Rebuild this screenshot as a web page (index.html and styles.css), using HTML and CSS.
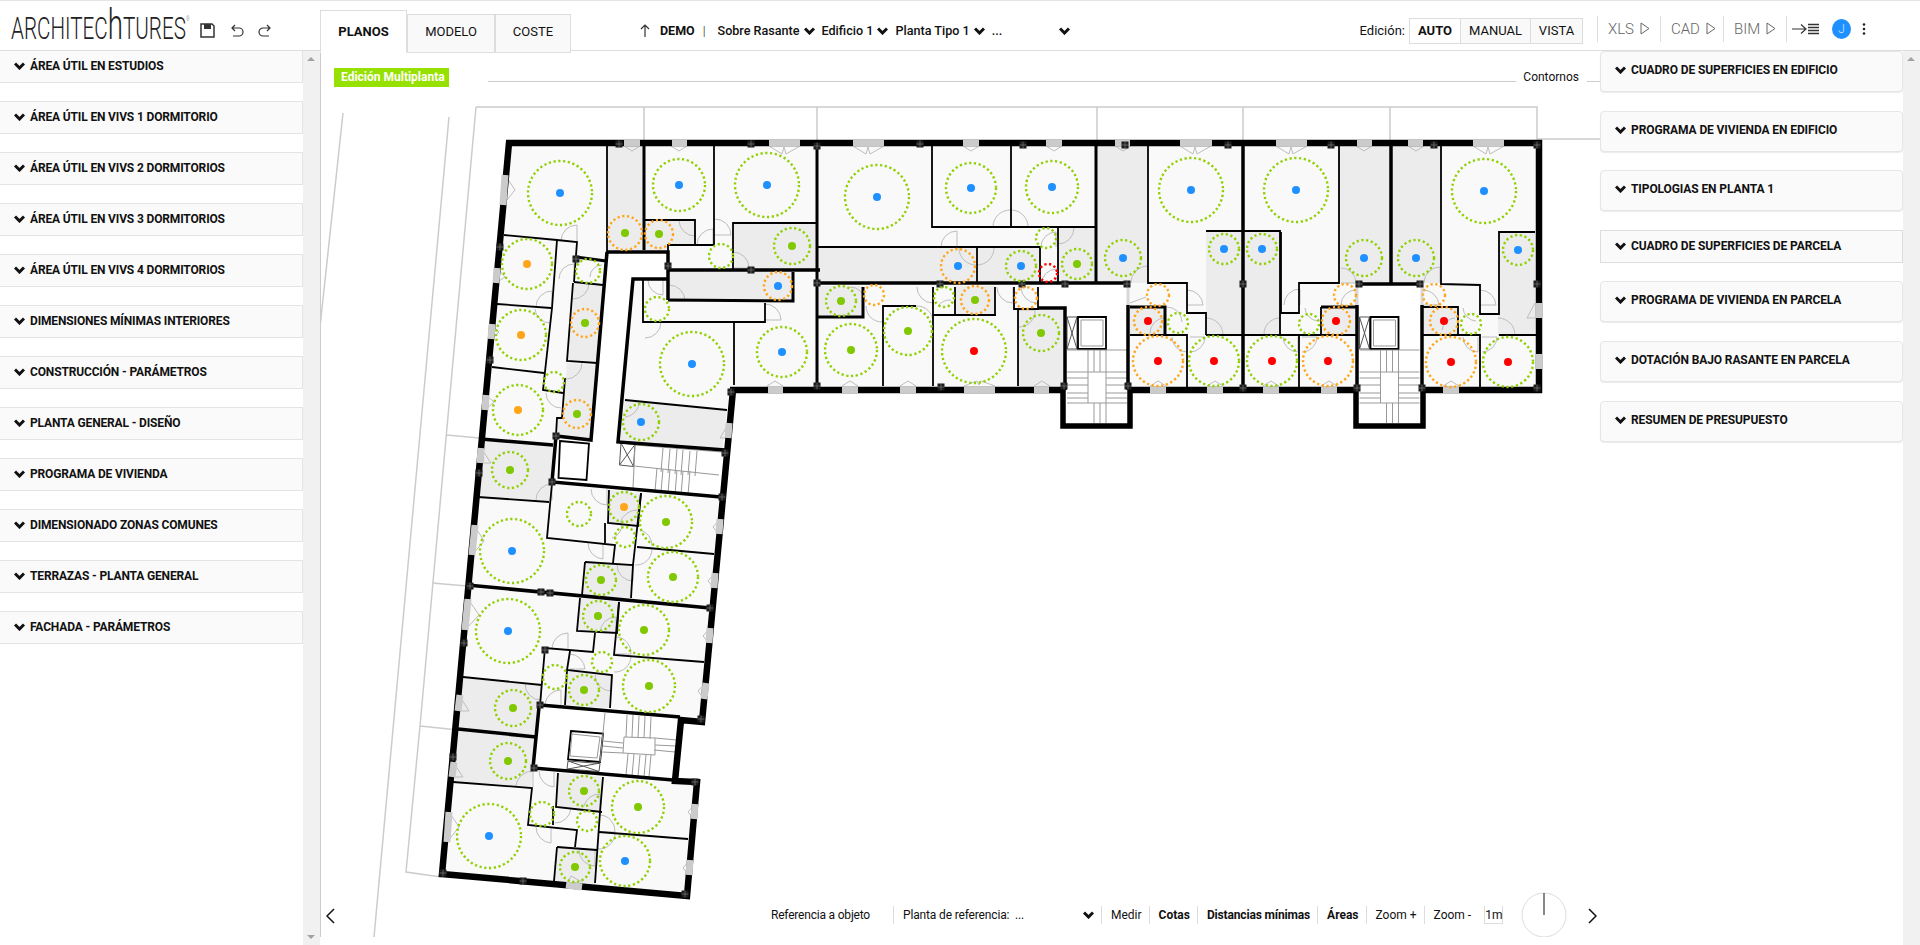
FILE: index.html
```html
<!doctype html>

<html lang="es">

<head>
    <meta charset="utf-8">
    <title>Architechtures</title>
    <link rel="stylesheet" href="styles.css">
</head>

<body>

    <header class="topbar">
        <div class="brand">
            <div class="logo"><span class="logo-word">ARCHITEC<span class="logo-h">h</span>TURES<span class="logo-reg">®</span></span></div>
            <svg class="tool tool-save" viewBox="0 0 15 15" width="15" height="15">
                <path class="ico" d="M1 1h11l2 2v11H1z" />
                <path class="ico-fill" d="M4 1h7v5H4z" />
            </svg>
            <svg class="tool tool-undo" viewBox="0 0 14 16" width="14" height="16">
                <path class="ico-thin" d="M2 5h7a4 4 0 0 1 0 8H3M5 2 2 5l3 3" />
            </svg>
            <svg class="tool tool-redo" viewBox="0 0 14 16" width="14" height="16">
                <path class="ico-thin" d="M12 5H5a4 4 0 0 0 0 8h6M9 2l3 3-3 3" />
            </svg>
        </div>

        <nav class="tabs">
            <a class="tab tab-active" href="#">PLANOS</a>
            <a class="tab tab-model" href="#">MODELO</a>
            <a class="tab tab-cost" href="#">COSTE</a>
        </nav>

        <div class="crumbs">
            <svg class="crumb-up" viewBox="0 0 10 14" width="10" height="14">
                <path class="ico-thin" d="M5 13V1M1 5l4-4 4 4" />
            </svg>
            <b class="crumb-demo">DEMO</b>
            <span class="crumb-sep">|</span>
            <span class="crumb">Sobre Rasante</span>
            <svg class="chev" viewBox="0 0 11 8"><path d="M1 1.5l4.5 4.5L10 1.5" /></svg>
            <span class="crumb">Edificio 1</span>
            <svg class="chev" viewBox="0 0 11 8"><path d="M1 1.5l4.5 4.5L10 1.5" /></svg>
            <span class="crumb">Planta Tipo 1</span>
            <svg class="chev" viewBox="0 0 11 8"><path d="M1 1.5l4.5 4.5L10 1.5" /></svg>
            <span class="crumb crumb-more">...</span>
            <svg class="chev" viewBox="0 0 11 8"><path d="M1 1.5l4.5 4.5L10 1.5" /></svg>
        </div>

        <div class="actions">
            <span class="edit-label">Edición:</span>
            <div class="segment">
                <button class="seg seg-on" type="button">AUTO</button>
                <button class="seg seg-manual" type="button">MANUAL</button>
                <button class="seg seg-view" type="button">VISTA</button>
            </div>
            <a class="export export-first" href="#">XLS <svg class="play" viewBox="0 0 10 13"><path d="M1 1l8 5.5L1 12z" /></svg></a>
            <a class="export" href="#">CAD <svg class="play" viewBox="0 0 10 13"><path d="M1 1l8 5.5L1 12z" /></svg></a>
            <a class="export" href="#">BIM <svg class="play" viewBox="0 0 10 13"><path d="M1 1l8 5.5L1 12z" /></svg></a>
            <span class="export export-last">
                <svg viewBox="0 0 27 12" width="27" height="12">
                    <path class="ico-thin" d="M0 6h13M9 1.500l5 4.500-5 4.500" />
                    <path class="ico-lines" d="M16 1.500h11M16 4.500h11M16 7.500h11M16 10.500h11" />
                </svg>
            </span>
            <span class="avatar">J</span>
            <svg class="kebab" viewBox="0 0 4 12" width="4" height="12">
                <circle cx="2" cy="1.500" r="1.300" />
                <circle cx="2" cy="6" r="1.300" />
                <circle cx="2" cy="10.500" r="1.300" />
            </svg>
        </div>
    </header>

    <div class="workspace">

        <aside class="sidebar">
            <div class="side-list">
                <div class="acc"><svg class="chev" viewBox="0 0 11 8"><path d="M1 1.5l4.5 4.5L10 1.5" /></svg>ÁREA ÚTIL EN ESTUDIOS</div>
                <div class="acc"><svg class="chev" viewBox="0 0 11 8"><path d="M1 1.5l4.5 4.5L10 1.5" /></svg>ÁREA ÚTIL EN VIVS 1 DORMITORIO</div>
                <div class="acc"><svg class="chev" viewBox="0 0 11 8"><path d="M1 1.5l4.5 4.5L10 1.5" /></svg>ÁREA ÚTIL EN VIVS 2 DORMITORIOS</div>
                <div class="acc"><svg class="chev" viewBox="0 0 11 8"><path d="M1 1.5l4.5 4.5L10 1.5" /></svg>ÁREA ÚTIL EN VIVS 3 DORMITORIOS</div>
                <div class="acc"><svg class="chev" viewBox="0 0 11 8"><path d="M1 1.5l4.5 4.5L10 1.5" /></svg>ÁREA ÚTIL EN VIVS 4 DORMITORIOS</div>
                <div class="acc"><svg class="chev" viewBox="0 0 11 8"><path d="M1 1.5l4.5 4.5L10 1.5" /></svg>DIMENSIONES MÍNIMAS INTERIORES</div>
                <div class="acc"><svg class="chev" viewBox="0 0 11 8"><path d="M1 1.5l4.5 4.5L10 1.5" /></svg>CONSTRUCCIÓN - PARÁMETROS</div>
                <div class="acc"><svg class="chev" viewBox="0 0 11 8"><path d="M1 1.5l4.5 4.5L10 1.5" /></svg>PLANTA GENERAL - DISEÑO</div>
                <div class="acc"><svg class="chev" viewBox="0 0 11 8"><path d="M1 1.5l4.5 4.5L10 1.5" /></svg>PROGRAMA DE VIVIENDA</div>
                <div class="acc"><svg class="chev" viewBox="0 0 11 8"><path d="M1 1.5l4.5 4.5L10 1.5" /></svg>DIMENSIONADO ZONAS COMUNES</div>
                <div class="acc"><svg class="chev" viewBox="0 0 11 8"><path d="M1 1.5l4.5 4.5L10 1.5" /></svg>TERRAZAS - PLANTA GENERAL</div>
                <div class="acc"><svg class="chev" viewBox="0 0 11 8"><path d="M1 1.5l4.5 4.5L10 1.5" /></svg>FACHADA - PARÁMETROS</div>
            </div>
            <div class="scroll"><i class="arrow-up"></i><i class="arrow-down"></i></div>
        </aside>

        <main class="plan">
            <svg class="plan-canvas" viewBox="320 51 1280 886" width="1280" height="886">
                <defs>
                    <path id="leaf-top-2" class="door" d="M0 0l13 8 2-7 2 7 14-8" />
                    <path id="leaf-top-1" class="door" d="M0 0l8 5 8-5" />
                    <path id="leaf-bot-2" class="door" d="M0 0l13-5 2 4 2-4 14 5" />
                    <path id="leaf-bot-1" class="door" d="M0 0l8-5 8 5" />
                    <g id="column">
                        <rect class="col-box" x="-3.500" y="-3.500" width="7" height="7" />
                        <path class="col-grid" d="M-3.500 0h7M0-3.500v7" />
                    </g>
                    <g id="core">
                        <path class="thin-dark" d="M1067 317h10v32h-10zM1067 317l10 32M1077 317l-10 32" />
                        <path class="w2" d="M1078 349v-32h28v32z" />
                        <path class="gray-line" d="M1081 320h22v26h-22z" />
                        <path class="gray-line" d="M1067 350h60M1088 350v22M1094 350v22M1100 350v22M1106 350v22M1088 372h18v31h-18zM1067 372h21M1067 378h21M1067 385h21M1067 393h21M1067 398h21M1067 403h21M1106 372h21M1106 378h21M1106 385h21M1106 393h21M1106 398h21M1106 403h21M1094 403v20M1100 403v20M1106 403v20" />
                    </g>
                </defs>

                <!-- lineas de parcela -->
                <path class="site" d="M343 113 320 327M449 117 374 937M476 107H1537V139H1600M476 107 420 726 406 872 441 877M644 107V140M817 107V140M1097 107V140M1243 107V140M1390 107V140M447 435 479 438M432 583 467 586M420 726 458 730" />

                <!-- suelos -->
                <polygon class="floor" points="508,143 1065,143 1065,390 732,390 702,722 680,720 675,781 697,782 687,896 442,875" />
                <polygon class="floor" points="1065,143 1539,143 1539,390 1065,390" />
                <g class="core-floor">
                    <polygon points="607,252 668,252 668,279 633,279 618,442 725,450 720,497 551,483 556,436 591,439" />
                    <polygon points="539,706 680,717 673,780 535,768" />
                    <polygon points="1040,283 1128,283 1128,425 1065,425 1065,308 1040,308" />
                    <polygon points="1357,285 1422,285 1422,425 1357,425" />
                </g>
                <g class="room-gray">
                    <polygon points="607,146 644,146 644,250 607,250" />
                    <polygon points="645,220 695,220 695,245 668,245 668,250 645,250" />
                    <polygon points="733,223 817,223 817,270 733,270" />
                    <polygon points="668,270 793,270 793,301 668,301" />
                    <polygon points="573,283 603,285 597,363 567,361" />
                    <polygon points="567,363 597,365 590,438 556,435 558,418 562,418" />
                    <polygon points="625,400 727,410 722,450 619,442" />
                    <polygon points="481,439 553,445 549,502 476,497" />
                    <polygon points="818,247 976,247 976,283 818,283" />
                    <polygon points="977,248 1039,248 1039,283 977,283" />
                    <polygon points="1058,228 1095,228 1095,283 1058,283" />
                    <polygon points="1096,146 1147,146 1147,283 1096,283" />
                    <polygon points="1206,231 1243,231 1243,335 1206,335" />
                    <polygon points="1243,231 1280,231 1280,335 1243,335" />
                    <polygon points="818,286 863,286 863,317 818,317" />
                    <polygon points="955,286 995,286 995,315 955,315" />
                    <polygon points="1018,310 1065,310 1065,387 1018,387" />
                    <polygon points="1130,307 1165,307 1165,335 1130,335" />
                    <polygon points="1339,146 1390,146 1390,283 1339,283" />
                    <polygon points="1392,146 1441,146 1441,283 1392,283" />
                    <polygon points="1320,307 1356,307 1356,335 1320,335" />
                    <polygon points="1423,307 1458,307 1458,335 1423,335" />
                    <polygon points="1498,231 1535,231 1535,335 1498,335" />
                    <polygon points="609,490 640,493 638,526 607,523" />
                    <polygon points="585,562 633,565 630,598 582,595" />
                    <polygon points="580,598 619,602 617,633 577,631" />
                    <polygon points="566,670 611,675 610,708 565,705" />
                    <polygon points="463,677 541,685 539,707 535,735 458,729" />
                    <polygon points="458,729 536,737 531,788 453,782" />
                    <polygon points="558,773 603,777 600,811 556,807" />
                    <polygon points="557,847 597,850 595,884 554,881" />
                </g>

                <!-- nucleos de escalera -->
                <use href="#core" />
                <use href="#core" x="292.500" y="0" />
                <g class="wing-stairs">
                    <path class="thin-dark" d="M621 443l14 1.500-1.500 22-14-1.500zM621 443l12.500 23.500M635 444.500l-15.500 20.500" />
                    <path class="w2" d="M560 441l29 2.500-2.500 36.500-28-2z" />
                    <path class="gray-line" d="M635 445l87 7M634 466l85 9M635 445l-2 43M663 448l-2 24M670 449l-2 24M677 449l-2 25M683 450l-2 25M690 451l-2 24M697 451l-2 25M657 468l-2 23M663 469l-2 23M670 469l-2 24M677 470l-2 24M683 471l-2 24M690 471l-2 24" />
                    <path class="w2" d="M571 731l32 2.500-3 28.500-32-2.500z" />
                    <path class="gray-line" d="M572 734l28 3-3 21-27-2z" />
                    <path class="thin-dark" d="M568 761l32 2.500-1 8-32-2.500zM568 761l31 10.500M600 763l-32 6" />
                    <path class="gray-line" d="M605 713l-5 49M624 737l31 1v17l-32-2zM603 741l20 2M603 746l20 2M602 752l21 1M655 738l22 2M655 745l21 1M654 750l21 2M627 715l-1 22M633 715l-1 22M639 716l-1 22M645 716l-1 22M651 717l-1 22M628 754l-2 21M634 754l-2 22M640 755l-2 21M646 755l-2 22M651 755l-2 22" />
                </g>

                <!-- puertas -->
                <g class="door">
                    <path d="M561 241A16 16 0 0 1 577 225V242M559 279A15 15 0 0 1 574 264V279M536 307A16 16 0 0 1 552 291V307M535 309A15 15 0 0 0 550 323M679 220A16 16 0 0 0 695 236V220M697 245A16 16 0 0 1 713 229V245M715 219A16 16 0 0 1 731 235H715M733 252A16 16 0 0 1 749 268H733M669 285A16 16 0 0 1 685 301H669M648 280A15 15 0 0 0 663 295V280M645 338A16 16 0 0 0 661 322H645M765 304A16 16 0 0 1 781 320H765M573 299A16 16 0 0 0 589 283M566 379A16 16 0 0 0 582 363M546 393A15 15 0 0 0 561 408M625 417A15 15 0 0 0 639 402M590 277A12 12 0 0 1 602 265" />
                    <path d="M536 500A16 16 0 0 1 552 484V500M591 489A16 16 0 0 0 607 505V489M620 523A18 18 0 0 1 638 510M612 538A14 14 0 0 0 622 525M640 530A16 16 0 0 1 652 546M635 565A16 16 0 0 0 652 549M588 543A16 16 0 0 0 603 559V543M617 565A16 16 0 0 0 633 581V565M600 632A16 16 0 0 1 616 617V633M617 637A16 16 0 0 1 631 654H615M614 672A16 16 0 0 0 631 656M552 648A16 16 0 0 1 568 633V650M570 654A16 16 0 0 1 585 669H570M595 675A16 16 0 0 0 611 691V675M545 704A16 16 0 0 1 561 690V705M525 684A16 16 0 0 0 541 700V685M516 786A17 17 0 0 1 533 771V787M539 771A16 16 0 0 0 554 787V772M536 827A16 16 0 0 0 551 843V828M555 823A16 16 0 0 0 571 808M584 806A16 16 0 0 1 600 794V810M600 815A16 16 0 0 1 615 832H600M579 850A16 16 0 0 0 595 866V850M598 849A16 16 0 0 0 615 833" />
                    <path d="M993 227A17 17 0 0 1 1011 210V227M1011 210A17 17 0 0 1 1028 227M941 247A16 16 0 0 1 957 231V247M959 248A17 17 0 0 0 977 265 17 17 0 0 0 994 248M1058 244A16 16 0 0 0 1074 228M1041 285A16 16 0 0 1 1057 269V285M1041 247A15 15 0 0 1 1056 232V247M1131 283A17 17 0 0 1 1148 266V283M850 287A15 15 0 0 1 865 301M866 306A16 16 0 0 0 883 322V306M917 287A16 16 0 0 0 933 303V287M916 306A16 16 0 0 1 933 322M938 306A15 15 0 0 1 951 300M997 287A16 16 0 0 0 1013 303V287M1021 287A16 16 0 0 0 1037 303M1019 327A16 16 0 0 0 1035 310H1019M1130 303L1146 297M1187 290A16 16 0 0 1 1203 305H1187M1206 318A17 17 0 0 1 1223 335H1206M1264 335A16 16 0 0 1 1280 318V335M1284 305A16 16 0 0 1 1300 289V305M1150 333A15 15 0 0 1 1165 318M1167 307A15 15 0 0 1 1182 322M1172 337A15 15 0 0 0 1187 352V337M1190 352A15 15 0 0 0 1205 337H1190M1283 337A15 15 0 0 0 1298 352V337" />
                    <path d="M1341 268A15 15 0 0 1 1356 283H1341M1424 283A16 16 0 0 1 1440 267V283M1341 305A15 15 0 0 1 1356 290V305M1423 290A16 16 0 0 1 1439 305H1423M1480 290A16 16 0 0 1 1496 305H1480M1498 318A17 17 0 0 1 1515 335H1498M1302 352A15 15 0 0 0 1317 337H1302M1463 337A15 15 0 0 0 1478 352V337M1482 352A15 15 0 0 0 1497 337H1482M1442 330A14 14 0 0 1 1455 318M1305 308A14 14 0 0 0 1318 321M1463 308A14 14 0 0 0 1476 321" />
                    <path d="M505 175 515 190 503 205M497 268 505 277 496 283M491 324 499 332 491 339M486 395 494 402 485 410M481 448 491 463 480 463M474 525 484 541 472 555M468 599 479 615 465 630M459 695 469 711 458 711M453 762 463 777 452 777M449 812 459 827 447 842M729 423 720 438 727 438M720 519 713 527 719 534M715 573 708 581 714 588M710 628 703 636 709 643M705 683 698 691 704 699M695 804 688 812 694 819M690 860 683 868 689 875M566 886 571 876 582 882" />
                    <path d="M1535 303 1527 318H1535" />
                    <use href="#leaf-top-2" x="769" y="146" />
                    <use href="#leaf-top-2" x="853" y="146" />
                    <use href="#leaf-top-2" x="1180" y="146" />
                    <use href="#leaf-top-2" x="1276" y="146" />
                    <use href="#leaf-top-2" x="1473" y="146" />
                    <use href="#leaf-top-1" x="671" y="146" />
                    <use href="#leaf-top-1" x="963" y="146" />
                    <use href="#leaf-top-1" x="1046" y="146" />
                    <use href="#leaf-top-1" x="1115" y="146" />
                    <use href="#leaf-top-1" x="1356" y="146" />
                    <use href="#leaf-top-1" x="1408" y="146" />
                    <use href="#leaf-top-1" x="624" y="146" />
                    <use href="#leaf-bot-1" x="767" y="386" />
                    <use href="#leaf-bot-1" x="842" y="386" />
                    <use href="#leaf-bot-1" x="900" y="386" />
                    <use href="#leaf-bot-2" x="964" y="386" />
                    <use href="#leaf-bot-1" x="1034" y="386" />
                    <use href="#leaf-bot-1" x="1150" y="386" />
                    <use href="#leaf-bot-1" x="1207" y="386" />
                    <use href="#leaf-bot-1" x="1263" y="386" />
                    <use href="#leaf-bot-1" x="1321" y="386" />
                    <use href="#leaf-bot-1" x="1443" y="386" />
                </g>

                <!-- tabiques -->
                <g class="w2">
                    <polyline points="607,146 607,258" />
                    <polyline points="714,146 714,245 695,245 695,220 645,220" />
                    <polyline points="695,245 668,245 668,252" />
                    <polyline points="733,270 733,223 817,223" />
                    <polyline points="504,235 557,240 577,242 574,282" />
                    <polyline points="557,240 552,308 543,390 563,393" />
                    <polyline points="574,282 603,285" />
                    <polyline points="573,283 567,361 597,363" />
                    <polyline points="497,304 551,308" />
                    <polyline points="492,367 544,373" />
                    <polyline points="565,378 562,418 557,418 556,435" />
                    <polyline points="643,280 643,322 765,322 765,303" />
                    <polyline points="734,322 734,385" />
                    <polyline points="625,400 727,410" />
                    <polyline points="932,146 932,227 1095,227" />
                    <polyline points="1011,146 1011,227" />
                    <polyline points="1148,146 1148,283 1187,283 1187,313 1206,313 1206,335" />
                    <polyline points="1206,231 1280,231 1280,335" />
                    <polyline points="817,247 1040,247 1040,283" />
                    <polyline points="977,248 977,283" />
                    <polyline points="1058,228 1058,283" />
                    <polyline points="883,386 883,306 916,306" />
                    <polyline points="933,287 933,386" />
                    <polyline points="933,315 996,315" />
                    <polyline points="955,287 955,315" />
                    <polyline points="995,287 995,315" />
                    <polyline points="1018,310 1018,386" />
                    <polyline points="1014,287 1014,309 1038,309 1038,287" />
                    <polyline points="1130,335 1187,335 1187,387" />
                    <polyline points="1206,335 1357,335" />
                    <polyline points="1339,146 1339,283 1299,283 1299,313 1281,313 1281,232" />
                    <polyline points="1441,146 1441,284 1480,285 1480,314 1499,314 1499,232 1535,232" />
                    <polyline points="1499,335 1536,335" />
                    <polyline points="1423,335 1480,335 1480,387" />
                    <polyline points="1299,335 1299,387" />
                    <polyline points="1321,335 1321,307" />
                    <polyline points="1423,307 1458,307 1458,335" />
                    <polyline points="478,497 549,502" />
                    <polyline points="552,483 547,538 615,545 613,563" />
                    <polyline points="585,562 633,565 631,598" />
                    <polyline points="585,562 582,595" />
                    <polyline points="609,490 608,523 638,526 641,493" />
                    <polyline points="605,523 605,543" />
                    <polyline points="637,547 714,554" />
                    <polyline points="641,493 633,565" />
                    <polyline points="580,598 577,631 617,633 619,602" />
                    <polyline points="619,602 614,655 704,662" />
                    <polyline points="595,633 593,652 545,648 540,705" />
                    <polyline points="570,651 567,670 612,675 610,708" />
                    <polyline points="567,670 565,705" />
                    <polyline points="463,677 542,685" />
                    <polyline points="453,782 532,788 528,825 577,830 575,847" />
                    <polyline points="558,773 556,807 602,812" />
                    <polyline points="603,777 600,812 595,883" />
                    <polyline points="599,832 688,839" />
                    <polyline points="557,847 597,850" />
                    <polyline points="557,847 554,881" />
                    <polyline points="553,806 553,825" />
                </g>
                <g class="w3">
                    <polyline points="576,257 606,261" />
                    <polyline points="644,146 644,250" />
                    <polyline points="668,300 793,301 793,272" />
                    <polyline points="1096,146 1096,283" />
                    <polyline points="818,317 863,317 863,287" />
                    <polyline points="1130,307 1165,307 1165,335" />
                    <polyline points="1321,307 1356,307" />
                    <polyline points="817,146 817,390" />
                </g>
                <g class="w4">
                    <polyline points="607,252 668,252 668,300" />
                    <polyline points="668,270 820,270" />
                    <polyline points="668,279 633,279 618,442 725,450" />
                    <polyline points="607,252 591,440 556,436 552,482 721,497" />
                    <polyline points="481,439 553,445" />
                    <polyline points="817,283 1128,283" />
                    <polyline points="1128,305 1128,390" />
                    <polyline points="1038,308 1065,308 1065,390" />
                    <polyline points="1243,146 1243,390" />
                    <polyline points="1391,146 1391,284" />
                    <polyline points="1360,284 1420,284" />
                    <polyline points="1357,305 1357,390" />
                    <polyline points="1422,305 1422,390" />
                    <polyline points="467,585 710,608" />
                    <polyline points="540,705 680,717" />
                    <polyline points="458,729 536,737" />
                    <polyline points="539,707 533,768 673,780" />
                </g>
                <path class="door-strip" d="M1128 285V305M1357 285V305M1422 285V305" />

                <!-- muros exteriores -->
                <path class="w7" d="M1065 390H733L702 722 681 720 675 781 697 782 687 896 442 874 509 143H1539V390H1422M1357 390H1128" />
                <path class="w6" d="M1063 390V426H1130V390M1356 390V426H1423V390" />

                <!-- ventanas -->
                <path class="window" d="M624 143H640M672 143H687M769 143H800M853 143H884M963 143H979M1046 143H1062M1115 143H1130M1180 143H1212M1276 143H1307M1357 143H1372M1408 143H1423M1473 143H1504M768 390H783M842 390H858M900 390H916M964 390H995M1034 390H1049M1150 390H1166M1207 390H1223M1263 390H1279M1321 390H1337M1443 390H1459M1539 303V318M1539 354V369M505 175 503 205M497 268 496 283M492 324 491 339M486 395 485 410M481 448 480 463M475 525 472 555M468 599 465 630M460 695 458 711M454 762 452 777M449 812 447 842M729 423 728 438M720 519 719 534M715 573 714 588M710 628 709 643M706 683 704 699M695 804 694 819M690 860 689 875M566 885 582 887" />

                <!-- pilares -->
                <g>
                    <use href="#column" x="619" y="144" /><use href="#column" x="751" y="144" /><use href="#column" x="817" y="146" />
                    <use href="#column" x="500" y="247" /><use href="#column" x="490" y="360" /><use href="#column" x="479" y="473" />
                    <use href="#column" x="576" y="259" /><use href="#column" x="668" y="266" /><use href="#column" x="751" y="270" />
                    <use href="#column" x="817" y="283" /><use href="#column" x="817" y="386" /><use href="#column" x="731" y="392" />
                    <use href="#column" x="556" y="436" /><use href="#column" x="552" y="482" /><use href="#column" x="722" y="497" />
                    <use href="#column" x="725" y="453" /><use href="#column" x="920" y="144" /><use href="#column" x="1023" y="145" />
                    <use href="#column" x="1125" y="145" /><use href="#column" x="1228" y="145" /><use href="#column" x="940" y="284" />
                    <use href="#column" x="1022" y="284" /><use href="#column" x="1065" y="284" /><use href="#column" x="1127" y="284" />
                    <use href="#column" x="1243" y="284" /><use href="#column" x="941" y="387" /><use href="#column" x="1243" y="388" />
                    <use href="#column" x="1064" y="386" /><use href="#column" x="1128" y="386" /><use href="#column" x="1331" y="145" />
                    <use href="#column" x="1434" y="145" /><use href="#column" x="1537" y="145" /><use href="#column" x="1537" y="284" />
                    <use href="#column" x="1537" y="388" /><use href="#column" x="1359" y="284" /><use href="#column" x="1420" y="284" />
                    <use href="#column" x="1357" y="388" /><use href="#column" x="1422" y="388" /><use href="#column" x="470" y="586" />
                    <use href="#column" x="464" y="643" /><use href="#column" x="541" y="592" /><use href="#column" x="550" y="593" />
                    <use href="#column" x="710" y="608" /><use href="#column" x="701" y="719" /><use href="#column" x="545" y="650" />
                    <use href="#column" x="540" y="705" /><use href="#column" x="453" y="757" /><use href="#column" x="534" y="768" />
                    <use href="#column" x="695" y="782" /><use href="#column" x="443" y="873" /><use href="#column" x="523" y="881" />
                    <use href="#column" x="685" y="894" />
                </g>

                <!-- radios de giro -->
                <g class="ring ring-g">
                    <circle cx="560" cy="193" r="32" /><circle cx="527" cy="264" r="25" /><circle cx="521" cy="335" r="25" />
                    <circle cx="518" cy="410" r="25" /><circle cx="679" cy="185" r="26" /><circle cx="767" cy="185" r="32" />
                    <circle cx="792" cy="246" r="18" /><circle cx="721" cy="256" r="12" /><circle cx="657" cy="309" r="12" />
                    <circle cx="692" cy="364" r="32" /><circle cx="782" cy="352" r="25" /><circle cx="588" cy="271" r="12" />
                    <circle cx="554" cy="382" r="10" /><circle cx="641" cy="422" r="18" /><circle cx="510" cy="470" r="18" />
                    <circle cx="877" cy="197" r="32" /><circle cx="971" cy="188" r="25" /><circle cx="1052" cy="187" r="26" />
                    <circle cx="1191" cy="190" r="32" /><circle cx="1296" cy="190" r="32" /><circle cx="1123" cy="258" r="18" />
                    <circle cx="1224" cy="249" r="15" /><circle cx="1262" cy="249" r="15" /><circle cx="1077" cy="264" r="15" />
                    <circle cx="1021" cy="266" r="15" /><circle cx="1046" cy="238" r="10" /><circle cx="841" cy="301" r="15" />
                    <circle cx="944" cy="297" r="10" /><circle cx="908" cy="331" r="24" /><circle cx="851" cy="350" r="26" />
                    <circle cx="974" cy="351" r="32" /><circle cx="1041" cy="333" r="18" /><circle cx="1178" cy="323" r="10" />
                    <circle cx="1214" cy="361" r="25" /><circle cx="1272" cy="361" r="25" /><circle cx="1518" cy="250" r="15" />
                    <circle cx="1484" cy="191" r="32" /><circle cx="1416" cy="258" r="18" /><circle cx="1364" cy="258" r="18" />
                    <circle cx="1309" cy="324" r="10" /><circle cx="1471" cy="324" r="10" /><circle cx="1508" cy="362" r="25" />
                    <circle cx="579" cy="514" r="12" /><circle cx="624" cy="507" r="15" /><circle cx="666" cy="522" r="26" />
                    <circle cx="625" cy="537" r="10" /><circle cx="673" cy="577" r="25" /><circle cx="601" cy="580" r="15" />
                    <circle cx="512" cy="551" r="32" /><circle cx="508" cy="631" r="32" /><circle cx="598" cy="616" r="15" />
                    <circle cx="644" cy="630" r="25" /><circle cx="602" cy="662" r="10" /><circle cx="649" cy="686" r="26" />
                    <circle cx="555" cy="677" r="12" /><circle cx="584" cy="690" r="15" /><circle cx="513" cy="708" r="18" />
                    <circle cx="508" cy="761" r="18" /><circle cx="584" cy="791" r="15" /><circle cx="638" cy="807" r="26" />
                    <circle cx="542" cy="814" r="12" /><circle cx="587" cy="821" r="10" /><circle cx="489" cy="836" r="32" />
                    <circle cx="625" cy="861" r="25" /><circle cx="575" cy="867" r="15" />
                </g>
                <g class="ring ring-o">
                    <circle cx="625" cy="233" r="17" /><circle cx="659" cy="234" r="14" /><circle cx="778" cy="286" r="14" />
                    <circle cx="585" cy="323" r="14" /><circle cx="577" cy="414" r="14" /><circle cx="958" cy="266" r="17" />
                    <circle cx="874" cy="295" r="10" /><circle cx="975" cy="300" r="14" /><circle cx="1026" cy="298" r="11" />
                    <circle cx="1148" cy="321" r="14" /><circle cx="1158" cy="295" r="11" /><circle cx="1158" cy="361" r="25" />
                    <circle cx="1345" cy="295" r="11" /><circle cx="1336" cy="321" r="14" /><circle cx="1328" cy="361" r="25" />
                    <circle cx="1434" cy="295" r="11" /><circle cx="1444" cy="321" r="14" /><circle cx="1451" cy="362" r="25" />
                </g>
                <circle class="ring ring-r" cx="1048" cy="273" r="9" />

                <g class="dot-blue">
                    <circle cx="560" cy="193" r="4" /><circle cx="679" cy="185" r="4" /><circle cx="767" cy="185" r="4" />
                    <circle cx="778" cy="286" r="4" /><circle cx="692" cy="364" r="4" /><circle cx="782" cy="352" r="4" />
                    <circle cx="641" cy="422" r="4" /><circle cx="877" cy="197" r="4" /><circle cx="971" cy="188" r="4" />
                    <circle cx="1052" cy="187" r="4" /><circle cx="1191" cy="190" r="4" /><circle cx="1296" cy="190" r="4" />
                    <circle cx="1123" cy="258" r="4" /><circle cx="1224" cy="249" r="4" /><circle cx="1262" cy="249" r="4" />
                    <circle cx="1021" cy="266" r="4" /><circle cx="958" cy="266" r="4" /><circle cx="1518" cy="250" r="4" />
                    <circle cx="1484" cy="191" r="4" /><circle cx="1416" cy="258" r="4" /><circle cx="1364" cy="258" r="4" />
                    <circle cx="512" cy="551" r="4" /><circle cx="508" cy="631" r="4" /><circle cx="489" cy="836" r="4" />
                    <circle cx="625" cy="861" r="4" />
                </g>
                <g class="dot-green">
                    <circle cx="625" cy="233" r="4" /><circle cx="659" cy="234" r="4" /><circle cx="792" cy="246" r="4" />
                    <circle cx="585" cy="323" r="4" /><circle cx="577" cy="414" r="4" /><circle cx="510" cy="470" r="4" />
                    <circle cx="1077" cy="264" r="4" /><circle cx="841" cy="301" r="4" /><circle cx="975" cy="300" r="4" />
                    <circle cx="908" cy="331" r="4" /><circle cx="851" cy="350" r="4" /><circle cx="1041" cy="333" r="4" />
                    <circle cx="666" cy="522" r="4" /><circle cx="673" cy="577" r="4" /><circle cx="601" cy="580" r="4" />
                    <circle cx="598" cy="616" r="4" /><circle cx="644" cy="630" r="4" /><circle cx="649" cy="686" r="4" />
                    <circle cx="584" cy="690" r="4" /><circle cx="513" cy="708" r="4" /><circle cx="508" cy="761" r="4" />
                    <circle cx="584" cy="791" r="4" /><circle cx="638" cy="807" r="4" /><circle cx="575" cy="867" r="4" />
                </g>
                <g class="dot-orange">
                    <circle cx="527" cy="264" r="4" /><circle cx="521" cy="335" r="4" /><circle cx="518" cy="410" r="4" />
                    <circle cx="624" cy="507" r="4" />
                </g>
                <g class="dot-red">
                    <circle cx="974" cy="351" r="4" /><circle cx="1148" cy="321" r="4" /><circle cx="1158" cy="361" r="4" />
                    <circle cx="1214" cy="361" r="4" /><circle cx="1272" cy="361" r="4" /><circle cx="1336" cy="321" r="4" />
                    <circle cx="1328" cy="361" r="4" /><circle cx="1444" cy="321" r="4" /><circle cx="1451" cy="362" r="4" />
                    <circle cx="1508" cy="362" r="4" />
                </g>
            </svg>

            <div class="plan-head">
                <span class="badge">Edición Multiplanta</span>
                <span class="head-line"></span>
                <span class="head-label">Contornos</span>
                <span class="head-end"></span>
            </div>

            <div class="plan-foot">
                <svg class="pager pager-prev" viewBox="0 0 9 16" width="9" height="16"><path d="M8 1 1 8l7 7" /></svg>
                <span class="foot-ref">Referencia a objeto</span>
                <span class="foot-item foot-floor">Planta de referencia:&nbsp; ...
                    <svg class="chev" viewBox="0 0 11 8"><path d="M1 1.5l4.5 4.5L10 1.5" /></svg>
                </span>
                <span class="foot-item">Medir</span>
                <span class="foot-item foot-bold">Cotas</span>
                <span class="foot-item foot-bold foot-long">Distancias mínimas</span>
                <span class="foot-item foot-bold">Áreas</span>
                <span class="foot-item">Zoom +</span>
                <span class="foot-item">Zoom -</span>
                <span class="scale">1m</span>
                <svg class="compass" viewBox="0 0 46 46" width="46" height="46">
                    <circle cx="23" cy="23" r="22" />
                    <path d="M23 1v22" />
                </svg>
                <svg class="pager pager-next" viewBox="0 0 9 16" width="9" height="16"><path d="M1 1l7 7-7 7" /></svg>
            </div>
        </main>

        <aside class="summary">
            <div class="summary-list">
                <div class="panel"><svg class="chev" viewBox="0 0 11 8"><path d="M1 1.5l4.5 4.5L10 1.5" /></svg>CUADRO DE SUPERFICIES EN EDIFICIO</div>
                <div class="panel"><svg class="chev" viewBox="0 0 11 8"><path d="M1 1.5l4.5 4.5L10 1.5" /></svg>PROGRAMA DE VIVIENDA EN EDIFICIO</div>
                <div class="panel"><svg class="chev" viewBox="0 0 11 8"><path d="M1 1.5l4.5 4.5L10 1.5" /></svg>TIPOLOGIAS EN PLANTA 1</div>
                <div class="panel panel-flat"><svg class="chev" viewBox="0 0 11 8"><path d="M1 1.5l4.5 4.5L10 1.5" /></svg>CUADRO DE SUPERFICIES DE PARCELA</div>
                <div class="panel"><svg class="chev" viewBox="0 0 11 8"><path d="M1 1.5l4.5 4.5L10 1.5" /></svg>PROGRAMA DE VIVIENDA EN PARCELA</div>
                <div class="panel"><svg class="chev" viewBox="0 0 11 8"><path d="M1 1.5l4.5 4.5L10 1.5" /></svg>DOTACIÓN BAJO RASANTE EN PARCELA</div>
                <div class="panel"><svg class="chev" viewBox="0 0 11 8"><path d="M1 1.5l4.5 4.5L10 1.5" /></svg>RESUMEN DE PRESUPUESTO</div>
            </div>
            <div class="scroll"><i class="arrow-up"></i></div>
        </aside>

    </div>

</body>

</html>
```

FILE: styles.css
```css
* {
    box-sizing: border-box;
}

html,
body {
    height: 100%;
}

body {
    margin: 0;
    overflow: hidden;
    background: #fff;
    color: #111;
    font-family: Roboto, "Liberation Sans", sans-serif;
    font-size: 13px;
}

.chev {
    flex: none;
    width: 11px;
    height: 8px;
}

.chev path {
    fill: none;
    stroke: #111;
    stroke-width: 3;
}

.ico {
    fill: none;
    stroke: #333;
    stroke-width: 1.5;
}

.ico-fill {
    fill: #333;
}

.ico-thin {
    fill: none;
    stroke: #333;
    stroke-width: 1.2;
}

.ico-lines {
    fill: none;
    stroke: #333;
    stroke-width: 1.5;
}

/* top bar */

.topbar {
    display: flex;
    height: 51px;
    border-top: 1px solid #e4e4e4;
    border-bottom: 1px solid #ddd;
    position: relative;
    z-index: 2;
}

.brand {
    display: flex;
    align-items: flex-start;
    width: 320px;
    flex: none;
    padding: 1px 0 0 11px;
}

.logo {
    flex: none;
    width: 182px;
    overflow: visible;
}

.logo-word {
    display: inline-block;
    color: #222;
    font-size: 32px;
    font-weight: 300;
    line-height: 44px;
    white-space: nowrap;
    transform: scaleX(.645);
    transform-origin: left center;
}

.logo-h {
    font-size: 43px;
}

.logo-reg {
    color: #888;
    font-size: 7px;
    line-height: 0;
    vertical-align: 18px;
}

.tool {
    flex: none;
    margin-top: 21px;
}

.tool-save {
    margin-left: 7px;
}

.tool-undo {
    margin-left: 15px;
}

.tool-redo {
    margin-left: 14px;
}

.tabs {
    display: flex;
    align-items: flex-end;
    height: 51px;
    margin-top: -1px;
}

.tab {
    display: flex;
    align-items: center;
    justify-content: center;
    height: 39px;
    margin-bottom: -2px;
    padding-bottom: 5px;
    border: 1px solid #ddd;
    background: #f9f9f9;
    color: #111;
    text-decoration: none;
    font-size: 13px;
}

.tab-active {
    width: 87px;
    height: 43px;
    padding-top: 1px;
    padding-bottom: 2px;
    border-bottom-color: #fff;
    background: #fff;
    font-weight: 700;
}

.tab-model {
    width: 88px;
}

.tab-cost {
    width: 76px;
}

.crumbs {
    display: flex;
    align-items: center;
    margin-left: 69px;
    padding-top: 10px;
    font-size: 12.6px;
    font-weight: 500;
}

.crumb-up {
    margin-right: 10px;
}

.crumb-demo {
    font-weight: 700;
    font-size: 12.5px;
}

.crumb-sep {
    margin: 0 12px 0 8px;
    font-weight: 300;
}

.crumb + .chev {
    margin: 0 7px 0 4px;
}

.crumb-more {
    width: 63px;
}

.actions {
    display: flex;
    align-items: center;
    margin-left: auto;
    padding: 10px 54px 0 0;
}

.edit-label {
    margin-right: 4px;
}

.segment {
    display: flex;
    height: 26px;
    border: 1px solid #ddd;
}

.seg {
    padding: 0;
    border: 0;
    border-left: 1px solid #ddd;
    background: #f9f9f9;
    color: #111;
    font: inherit;
}

.seg-on {
    width: 50px;
    border-left: 0;
    background: #fff;
    font-weight: 700;
}

.seg-manual {
    width: 70px;
}

.seg-view {
    width: 52px;
}

.export {
    display: flex;
    align-items: center;
    height: 26px;
    margin-bottom: 4px;
    padding-left: 10px;
    border-left: 1px solid #ddd;
    color: #666;
    text-decoration: none;
    font-size: 15px;
    font-weight: 300;
    width: 63px;
}

.export-first {
    margin-left: 14px;
}

.export-last {
    width: auto;
    padding-left: 5px;
}

.play {
    width: 10px;
    height: 13px;
    margin-left: 6px;
}

.play path {
    fill: none;
    stroke: #666;
}

.avatar {
    display: flex;
    align-items: center;
    justify-content: center;
    width: 19px;
    height: 20px;
    margin: 0 0 4px 13px;
    border-radius: 50%;
    background: #1e90ff;
    color: #cfe6ff;
    font-size: 12px;
    font-weight: 300;
}

.kebab {
    margin: 0 0 4px 11px;
    fill: #222;
}

/* main columns */

.workspace {
    display: flex;
    height: 894px;
}

.sidebar,
.summary {
    display: flex;
    flex: none;
    width: 320px;
}

.side-list {
    width: 303px;
    margin-top: -1px;
}

.summary-list {
    width: 303px;
    padding-top: 0;
}

.acc {
    display: flex;
    align-items: center;
    height: 33px;
    margin-bottom: 18px;
    padding: 0 0 2px 14px;
    border: 1px solid #e4e4e4;
    border-left: 0;
    background: #fafafa;
    font-size: 12px;
    font-weight: 700;
    letter-spacing: -.15px;
}

.acc .chev,
.panel .chev {
    margin-right: 5px;
}

.panel {
    display: flex;
    align-items: center;
    height: 41px;
    margin-bottom: 18.600px;
    padding: 0 14px 3px;
    border: 1px solid #e6e6e6;
    border-radius: 4px;
    background: #fafafa;
    box-shadow: 0 1px 1px rgba(0, 0, 0, .08);
    font-size: 12px;
    font-weight: 700;
    letter-spacing: -.1px;
}

.panel-flat {
    height: 33px;
    padding-bottom: 1px;
    border-width: 1px;
    border-color: #ddd;
    border-radius: 0;
    box-shadow: none;
}

.scroll {
    position: relative;
    flex: none;
    width: 17px;
    background: #f1f1f1;
}

.arrow-up,
.arrow-down {
    position: absolute;
    left: 4px;
    width: 0;
    height: 0;
    border-left: 4px solid transparent;
    border-right: 4px solid transparent;
}

.arrow-up {
    top: 6px;
    border-bottom: 4px solid #a3a3a3;
}

.arrow-down {
    bottom: 6px;
    border-top: 4px solid #a3a3a3;
}

/* plan */

.plan {
    position: relative;
    display: flex;
    flex-direction: column;
    flex: 1;
    align-self: flex-start;
    height: 886px;
    overflow: hidden;
    box-shadow: inset 1px 0 #ccc;
}

.plan-canvas {
    position: absolute;
    left: 0;
    top: 0;
}

.plan-head,
.plan-foot {
    position: relative;
    display: flex;
}

.plan-head {
    align-items: flex-start;
    height: 36px;
    padding: 17px 0 0 14px;
}

.badge {
    flex: none;
    width: 115px;
    height: 19px;
    padding-left: 7px;
    background: #97e100;
    color: #fff;
    font-size: 12px;
    font-weight: 700;
    line-height: 18px;
}

.head-line {
    flex: 1;
    margin: 13px 7px 0 39px;
    border-top: 1px solid #ccc;
}

.head-label {
    flex: none;
    line-height: 19px;
    font-size: 12px;
}

.head-end {
    flex: none;
    width: 13px;
    margin: 13px 0 0 8px;
    border-top: 1px solid #ccc;
}

.plan-foot {
    align-items: center;
    height: 44px;
    margin-top: auto;
    font-size: 12px;
}

.pager {
    flex: none;
}

.pager path {
    fill: none;
    stroke: #111;
    stroke-width: 1.500;
}

.pager-prev {
    margin: 2px 0 0 6px;
}

.foot-ref {
    flex: none;
    width: 122px;
    margin-left: 436px;
    letter-spacing: -.2px;
}

.foot-item {
    display: flex;
    flex: none;
    align-items: center;
    height: 18px;
    padding: 0 7px 0 9px;
    border-left: 1px solid #ddd;
    white-space: nowrap;
}

.foot-floor {
    width: 208px;
    letter-spacing: -.15px;
}

.foot-floor .chev {
    margin-left: auto;
}

.foot-bold {
    font-weight: 700;
}

.foot-long {
    letter-spacing: -.15px;
}

.scale {
    flex: none;
    width: 19px;
    height: 18px;
    margin-left: 6px;
    border: 1px solid #ddd;
    border-top: 0;
    line-height: 18px;
    text-align: center;
}

.compass {
    flex: none;
    margin-left: 18px;
}

.compass circle {
    fill: #fff;
    stroke: #ddd;
}

.compass path {
    stroke: #111;
}

.pager-next {
    margin: 2px 0 0 21px;
}

/* floor plan drawing */

.site {
    fill: none;
    stroke: #ccc;
    stroke-width: 1.500;
}

.floor {
    fill: #f9f9f9;
}

.core-floor {
    fill: #fff;
}

.room-gray {
    fill: #ececec;
}

.door {
    fill: none;
    stroke: #bdbdbd;
    stroke-width: 1;
}

.door-strip {
    fill: none;
    stroke: #d8d8d8;
    stroke-width: 3;
}

.thin-dark {
    fill: none;
    stroke: #555;
    stroke-width: 1;
}

.gray-line {
    fill: none;
    stroke: #999;
    stroke-width: 1;
}

.w2,
.w3,
.w4,
.w6,
.w7 {
    fill: none;
    stroke: #000;
}

.w2 {
    stroke-width: 1.800;
}

.w3 {
    stroke-width: 3;
}

.w4 {
    stroke-width: 3.500;
}

.w6 {
    stroke-width: 5.500;
}

.w7 {
    stroke-width: 6.500;
}

.window {
    fill: none;
    stroke: #cbcbcb;
    stroke-width: 7;
}

.col-box {
    fill: #1c1c1c;
}

.col-grid {
    fill: none;
    stroke: #888;
    stroke-width: .6;
}

.ring {
    fill: none;
    stroke-width: 2.400;
    stroke-dasharray: 2.200 2.600;
}

.ring-g {
    stroke: #8fd000;
}

.ring-o {
    stroke: #ffa51a;
}

.ring-r {
    stroke: #ff0000;
}

.dot-blue {
    fill: #1e90ff;
}

.dot-green {
    fill: #80c800;
}

.dot-orange {
    fill: #ffa51a;
}

.dot-red {
    fill: #ff0000;
}
```
